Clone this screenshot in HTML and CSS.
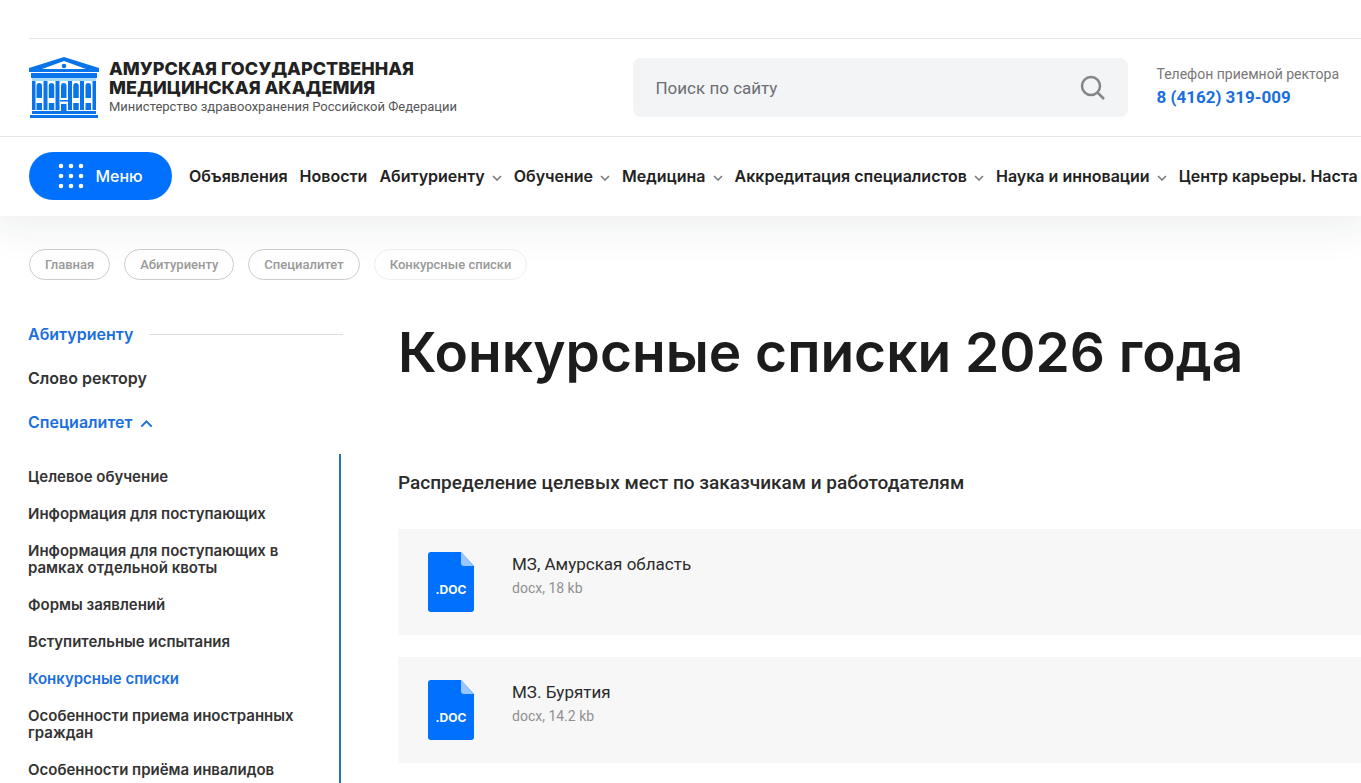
FILE: index.html
```html
<!DOCTYPE html>
<html lang="ru">
<head>
  <meta charset="UTF-8">
  <title>Конкурсные списки 2026 года</title>
  <meta name="viewport" content="width=device-width, initial-scale=1.0">
  <link rel="stylesheet" href="styles.css">
</head>
<body>
  <!-- shared symbols -->
  <svg class="sprite" aria-hidden="true">
    <symbol id="arrow" viewBox="0 0 10 6">
      <path d="M1 1l4 4 4-4" fill="none" stroke="currentColor" stroke-width="1.5"/>
    </symbol>
    <symbol id="doc" viewBox="0 0 46 60">
      <path d="M3 0h30l13 14v43a3 3 0 0 1-3 3H3a3 3 0 0 1-3-3V3a3 3 0 0 1 3-3z" fill="#0071ff"/>
      <path d="M33 0l13 14H36a3 3 0 0 1-3-3z" fill="#99c6ff"/>
    </symbol>
  </svg>

  <header class="header">
    <div class="header-top">
      <a class="logo" href="#">
        <svg class="logo-icon" viewBox="0 0 70 62" fill="#0a74ea">
          <path fill-rule="evenodd" d="M35 0L70 11v4H0v-4zM35 4L13 12h44z"/>
          <circle cx="35" cy="9" r="2.3"/>
          <path d="M2 16h66v5H2z"/>
          <path d="M3 21h64v3H3z" fill="#a8dcfa"/>
          <path d="M3 24h3.5v29H3zM14.5 24h4v29h-4zM26.5 24h4v29h-4zM39 24h4v29h-4zM51 24h4v29h-4zM63.5 24H67v29h-3.5z"/>
          <path d="M7.5 29a2.7 3 0 0 1 5.500 0v12H7.500zM19.750 29a2.750 3 0 0 1 5.500 0v12h-5.500zM32 29a2.750 3 0 0 1 5.500 0v12H32zM44.250 29a2.750 3 0 0 1 5.500 0v12h-5.500zM56.500 29a2.750 3 0 0 1 5.500 0v12h-5.500z"/>
          <path d="M7.500 46H13v7H7.500zM19.750 46h5.500v7h-5.500zM31 43h8v1.500h-8zM32 47h5.500v7H32zM44.250 46h5.500v7h-5.500zM56.500 46H62v7h-5.500z"/>
          <path d="M3 54h64v3H3zM1 58h68v3H1z"/>
        </svg>
        <span class="logo-text">
          <strong class="logo-name">Амурская государственная<br>медицинская академия</strong>
          <span class="logo-note">Министерство здравоохранения Российской Федерации</span>
        </span>
      </a>
      <form class="search">
        <input class="search-input" type="text" placeholder="Поиск по сайту" aria-label="Поиск по сайту">
        <button class="search-btn" type="button" aria-label="Найти">
          <svg width="26" height="26" viewBox="0 0 26 26" fill="none" stroke="#858585" stroke-width="2.5">
            <circle cx="11" cy="11" r="9"/>
            <path d="M17 17l7 7"/>
          </svg>
        </button>
      </form>
      <div class="phone">
        <span class="phone-label">Телефон приемной ректора</span>
        <a class="phone-link" href="tel:84162319009">8 (4162) 319-009</a>
      </div>
    </div>

    <div class="header-nav">
      <button class="menu-btn" type="button">
        <svg width="26" height="26" viewBox="0 0 26 26" fill="#fff">
          <circle cx="3" cy="3" r="2.3"/><circle cx="13" cy="3" r="2.3"/><circle cx="23" cy="3" r="2.3"/>
          <circle cx="3" cy="13" r="2.3"/><circle cx="13" cy="13" r="2.3"/><circle cx="23" cy="13" r="2.3"/>
          <circle cx="3" cy="23" r="2.3"/><circle cx="13" cy="23" r="2.3"/><circle cx="23" cy="23" r="2.3"/>
        </svg>
        Меню
      </button>
      <nav class="nav">
        <a href="#">Объявления</a>
        <a href="#">Новости</a>
        <a href="#">Абитуриенту <svg class="arrow"><use href="#arrow"/></svg></a>
        <a href="#">Обучение <svg class="arrow"><use href="#arrow"/></svg></a>
        <a href="#">Медицина <svg class="arrow"><use href="#arrow"/></svg></a>
        <a href="#">Аккредитация специалистов <svg class="arrow"><use href="#arrow"/></svg></a>
        <a href="#">Наука и инновации <svg class="arrow"><use href="#arrow"/></svg></a>
        <a href="#">Центр карьеры. Наста</a>
      </nav>
    </div>
  </header>

  <nav class="breadcrumbs">
    <a href="#">Главная</a>
    <a href="#">Абитуриенту</a>
    <a href="#">Специалитет</a>
    <span class="current">Конкурсные списки</span>
  </nav>

  <div class="page">
    <aside class="sidebar">
      <a class="side-title" href="#">Абитуриенту</a>
      <a class="side-link" href="#">Слово ректору</a>
      <a class="side-link active" href="#">Специалитет <svg class="arrow-up"><use href="#arrow"/></svg></a>
      <ul class="submenu">
        <li><a href="#">Целевое обучение</a></li>
        <li><a href="#">Информация для поступающих</a></li>
        <li><a href="#">Информация для поступающих в рамках отдельной квоты</a></li>
        <li><a href="#">Формы заявлений</a></li>
        <li><a href="#">Вступительные испытания</a></li>
        <li><a class="active" href="#">Конкурсные списки</a></li>
        <li><a href="#">Особенности приема иностранных граждан</a></li>
        <li><a href="#">Особенности приёма инвалидов</a></li>
      </ul>
    </aside>

    <main class="content">
      <h1>Конкурсные списки 2026 года</h1>
      <h2>Распределение целевых мест по заказчикам и работодателям</h2>
      <div class="files">
        <a class="file" href="#">
          <span class="file-icon"><svg width="46" height="60"><use href="#doc"/></svg><span class="file-ext">.DOC</span></span>
          <span class="file-info">
            <span class="file-name">МЗ, Амурская область</span>
            <span class="file-size">docx, 18 kb</span>
          </span>
        </a>
        <a class="file" href="#">
          <span class="file-icon"><svg width="46" height="60"><use href="#doc"/></svg><span class="file-ext">.DOC</span></span>
          <span class="file-info">
            <span class="file-name">МЗ. Бурятия</span>
            <span class="file-size">docx, 14.2 kb</span>
          </span>
        </a>
      </div>
    </main>
  </div>
</body>
</html>
```
FILE: styles.css
```css
* {
  box-sizing: border-box;
}
body {
  margin: 0;
  font-family: Roboto, Arial, sans-serif;
  color: #2b2b2b;
  background: #fff;
  overflow: hidden;
}
a {
  color: inherit;
  text-decoration: none;
}
.sprite {
  display: none;
}

/* header */
.header {
  padding-top: 38px;
  background: #fff;
  box-shadow: 0 0 40px 10px rgba(20, 35, 45, 0.08);
}
.header-top {
  display: flex;
  align-items: center;
  height: 98px;
  margin-left: 29px;
  padding-right: 22px;
  border-top: 1px solid #e6e6e6;
}
.logo {
  display: flex;
  align-items: center;
  gap: 10px;
}
.logo-icon {
  width: 70px;
  height: 62px;
}
.logo-text {
  display: flex;
  flex-direction: column;
}
.logo-name {
  font: 800 18px/19px Inter, sans-serif;
  text-transform: uppercase;
  color: #222;
}
.logo-note {
  font-size: 13px;
  line-height: 20px;
  color: #555;
  white-space: nowrap;
}
.search {
  display: flex;
  align-items: center;
  flex: 0 1 495px;
  height: 59px;
  margin-left: auto;
  padding: 0 22px;
  background: #f3f4f6;
  border-radius: 8px;
}
.search-input {
  flex: 1;
  min-width: 0;
  padding: 0;
  border: none;
  outline: none;
  background: none;
  font: 17px Roboto, sans-serif;
}
.search-input::placeholder {
  color: #6c6f73;
}
.search-btn {
  display: flex;
  padding: 0;
  border: none;
  background: none;
  cursor: pointer;
}
.phone {
  display: flex;
  flex-direction: column;
  margin-left: 28px;
  padding-bottom: 2px;
  white-space: nowrap;
}
.phone-label {
  font-size: 14px;
  line-height: 20px;
  color: #777;
}
.phone-link {
  font-size: 17px;
  font-weight: 700;
  line-height: 26px;
  color: #1a6fdc;
}

.header-nav {
  display: flex;
  align-items: center;
  gap: 17px;
  height: 80px;
  padding: 0 0 2px 29px;
  border-top: 1px solid #e6e6e6;
  overflow: hidden;
}
.menu-btn {
  display: flex;
  flex-shrink: 0;
  align-items: center;
  justify-content: center;
  gap: 11px;
  width: 143px;
  height: 48px;
  border: none;
  border-radius: 24px;
  background: #0071ff;
  color: #fff;
  font: 500 16px Inter, sans-serif;
  cursor: pointer;
}
.nav {
  display: flex;
  gap: 12px;
  font: 600 16px/20px Inter, sans-serif;
  color: #222;
  white-space: nowrap;
}
.arrow {
  width: 10px;
  height: 6px;
  margin: 0 0 1px 3px;
  color: #777;
}

/* breadcrumbs */
.breadcrumbs {
  display: flex;
  gap: 14px;
  padding: 33px 29px 0;
  font: 500 13px/29px Roboto, sans-serif;
  color: #999;
}
.breadcrumbs a,
.breadcrumbs .current {
  padding: 0 15px;
  border: 1px solid #ccc;
  border-radius: 16px;
}
.breadcrumbs .current {
  border-color: #eee;
}

.page {
  display: flex;
  gap: 55px;
  padding-left: 28px;
}

/* sidebar */
.sidebar {
  display: flex;
  flex-direction: column;
  flex: 0 0 315px;
  gap: 24px;
  padding-top: 44px;
  font: 600 16px/20px Inter, sans-serif;
  color: #333;
}
.side-title {
  display: flex;
  align-items: center;
  gap: 16px;
  color: #1a6fdc;
}
.side-title::after {
  content: "";
  flex: 1;
  height: 1px;
  background: #ddd;
}
.sidebar .active {
  color: #1a6fdc;
}
.arrow-up {
  width: 13px;
  height: 8px;
  margin-left: 4px;
  transform: rotate(180deg);
}
.submenu {
  display: flex;
  flex-direction: column;
  gap: 20px;
  margin: -2px 2px 0 0;
  padding: 14px 32px 14px 0;
  border-right: 2px solid #2272b4;
  list-style: none;
  font-size: 15px;
  line-height: 17px;
}

/* content */
.content {
  flex: 1;
  min-width: 0;
  padding-top: 37px;
}
h1 {
  margin: 0;
  font: 600 55px/70px Inter, sans-serif;
  color: #1c1c1c;
  white-space: nowrap;
}
h2 {
  margin: 84px 0 34px;
  font-size: 19px;
  font-weight: 500;
  line-height: 24px;
}
.files {
  display: flex;
  flex-direction: column;
  gap: 22px;
}
.file {
  display: flex;
  gap: 38px;
  min-height: 106px;
  padding: 23px 30px;
  background: #f7f7f7;
}
.file-icon {
  position: relative;
  width: 46px;
  height: 60px;
}
.file-ext {
  position: absolute;
  top: 31px;
  left: 0;
  width: 100%;
  text-align: center;
  font: 700 12px/14px Inter, sans-serif;
  color: #fff;
}
.file-info {
  display: flex;
  flex-direction: column;
}
.file-name {
  font-size: 17px;
  line-height: 24px;
}
.file-size {
  font-size: 14px;
  line-height: 25px;
  color: #909090;
}
```
